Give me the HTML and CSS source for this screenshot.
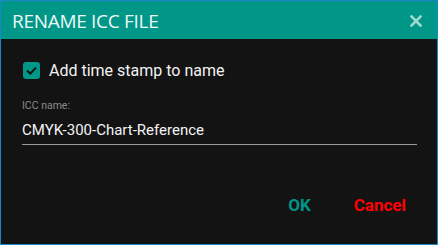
FILE: index.html
```html
<!DOCTYPE html>
<html lang="en">
<head>
  <meta charset="UTF-8">
  <title>Rename ICC File</title>
  <link rel="stylesheet" href="styles.css">
</head>
<body>
  <div class="dialog">
    <div class="dialog-header">
      <span class="dialog-title">RENAME ICC FILE</span>
      <svg class="close" width="12" height="12" viewBox="0 0 12 12">
        <path d="M1.5 1.5 L10.5 10.5 M10.5 1.5 L1.5 10.5" stroke="#9fd8d1" stroke-width="2.6" stroke-linecap="square"/>
      </svg>
    </div>
    <div class="dialog-body">
      <label class="check-row">
        <span class="checkbox">
          <svg width="17" height="17" viewBox="0 0 17 17">
            <path d="M4 8.6 L7.2 11.6 L13 5.6" fill="none" stroke="#111" stroke-width="2"/>
          </svg>
        </span>
        <span class="check-label">Add time stamp to name</span>
      </label>
      <div class="field">
        <div class="field-label">ICC name:</div>
        <div class="field-input">CMYK-300-Chart-Reference</div>
      </div>
    </div>
    <div class="dialog-actions">
      <button class="btn btn-ok">OK</button>
      <button class="btn btn-cancel">Cancel</button>
    </div>
  </div>
</body>
</html>
```

FILE: styles.css
```css
body {
  margin: 0;
  padding: 0;
  background-color: #131313;
  font-family: Roboto, "Liberation Sans", sans-serif;
}

.dialog {
  width: 438px;
  height: 245px;
  box-sizing: border-box;
  border: 1px solid #1a86c8;
  background-color: #131313;
  display: flex;
  flex-direction: column;
}

.dialog-header {
  height: 38px;
  background-color: #009688;
  display: flex;
  align-items: center;
  justify-content: space-between;
  padding: 0 15px 0 11px;
}

.dialog-title {
  font-family: "Open Sans", sans-serif;
  font-size: 19px;
  color: #eef8f6;
  letter-spacing: -0.3px;
  padding-top: 2px;
}

.close {
  display: block;
  margin-top: 1px;
}

.dialog-body {
  padding: 22px 20px 0 21px;
}

.check-row {
  display: flex;
  align-items: center;
  gap: 9px;
  padding-left: 1px;
}

.checkbox {
  width: 17px;
  height: 17px;
  border-radius: 3px;
  background-color: #009688;
  display: block;
}

.checkbox svg {
  display: block;
}

.check-label {
  font-size: 16px;
  color: #f2f2f2;
}

.field {
  margin-top: 19px;
}

.field-label {
  font-size: 10.5px;
  color: #8a8a8a;
}

.field-input {
  margin-top: 9px;
  font-size: 15px;
  color: #f4f4f4;
  padding-bottom: 5px;
  border-bottom: 1px solid #9a9a9a;
}

.dialog-actions {
  display: flex;
  justify-content: flex-end;
  gap: 43px;
  padding: 50px 31px 0 0;
}

.btn {
  background: none;
  border: none;
  padding: 0;
  font-family: Roboto, "Liberation Sans", sans-serif;
  font-size: 17px;
  font-weight: bold;
  cursor: pointer;
}

.btn-ok {
  color: #009688;
}

.btn-cancel {
  color: #ff0000;
}
```
